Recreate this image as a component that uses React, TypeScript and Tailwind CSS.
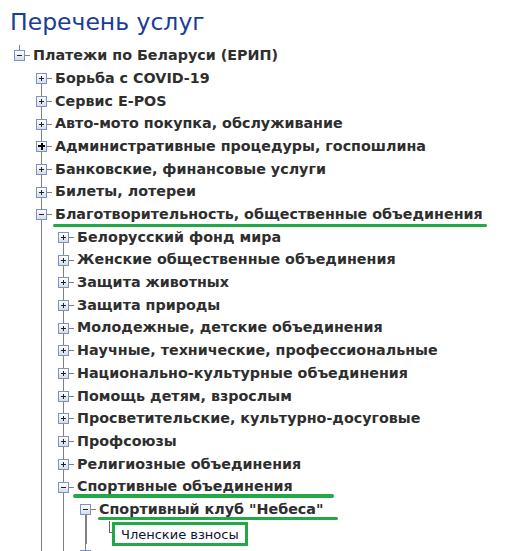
import React from 'react';

type Kind = 'plus' | 'minus' | 'leaf';

interface Row {
    text: string;
    level: number;
    kind: Kind;
    prev?: boolean;
    next?: boolean;
    bold?: boolean;
    mark?: { left: number; width: number; dy: number; h: number };
}

const rows: Row[] = [
    { text: 'Платежи по Беларуси (ЕРИП)', level: 0, kind: 'minus', prev: true },
    { text: 'Борьба с COVID-19', level: 1, kind: 'plus', next: true },
    { text: 'Сервис E-POS', level: 1, kind: 'plus', prev: true, next: true },
    { text: 'Авто-мото покупка, обслуживание', level: 1, kind: 'plus', prev: true, next: true },
    { text: 'Административные процедуры, госпошлина', level: 1, kind: 'plus', prev: true, next: true, bold: true },
    { text: 'Банковские, финансовые услуги', level: 1, kind: 'plus', prev: true, next: true },
    { text: 'Билеты, лотереи', level: 1, kind: 'plus', prev: true, next: true },
    {
        text: 'Благотворительность, общественные объединения', level: 1, kind: 'minus', prev: true, next: true,
        mark: { left: -2, width: 434, dy: 9, h: 3 },
    },
    { text: 'Белорусский фонд мира', level: 2, kind: 'plus', next: true },
    { text: 'Женские общественные объединения', level: 2, kind: 'plus', prev: true, next: true },
    { text: 'Защита животных', level: 2, kind: 'plus', prev: true, next: true },
    { text: 'Защита природы', level: 2, kind: 'plus', prev: true, next: true },
    { text: 'Молодежные, детские объединения', level: 2, kind: 'plus', prev: true, next: true },
    { text: 'Научные, технические, профессиональные', level: 2, kind: 'plus', prev: true, next: true },
    { text: 'Национально-культурные объединения', level: 2, kind: 'plus', prev: true, next: true },
    { text: 'Помощь детям, взрослым', level: 2, kind: 'plus', prev: true, next: true },
    { text: 'Просветительские, культурно-досуговые', level: 2, kind: 'plus', prev: true, next: true },
    { text: 'Профсоюзы', level: 2, kind: 'plus', prev: true, next: true },
    { text: 'Религиозные объединения', level: 2, kind: 'plus', prev: true, next: true },
    {
        text: 'Спортивные объединения', level: 2, kind: 'minus', prev: true, next: true,
        mark: { left: -4, width: 261, dy: 7, h: 4 },
    },
    {
        text: 'Спортивный клуб "Небеса"', level: 3, kind: 'minus', next: true,
        mark: { left: -1, width: 240, dy: 7, h: 3 },
    },
    { text: 'Членские взносы', level: 4, kind: 'leaf' },
    { text: '', level: 3, kind: 'plus', prev: true, next: true },
];

// the selected branch (level 3) is drawn with a heavier line
const THICK = 3;

// for each column left of the row: does the ancestor at that level have a following sibling
const guides = (index: number): boolean[] => {
    const level = rows[index].level;
    const out: boolean[] = [];
    for (let c = 0; c < level; c++) {
        let has = false;
        for (let j = index - 1; j >= 0; j--) {
            if (rows[j].level === c) {
                has = !!rows[j].next;
                break;
            }
        }
        out.push(has);
    }
    return out;
};

function ToggleBox({ kind, bold }: { kind: Kind; bold?: boolean }) {
    return (
        <div className="w-[11px] h-[11px] shrink-0 border border-[#7d93bf] bg-gradient-to-b from-white to-[#d5dcea]">
            <svg width="9" height="9" viewBox="0 0 9 9" className="block" shapeRendering="crispEdges">
                {bold ? (
                    <>
                        <rect x="1" y="3" width="7" height="2" fill="#000" />
                        <rect x="3.5" y="1" width="2" height="7" fill="#000" />
                    </>
                ) : (
                    <>
                        <rect x="2" y="4" width="5" height="1" fill="#222" />
                        {kind === 'plus' && <rect x="4" y="2" width="1" height="5" fill="#222" />}
                    </>
                )}
            </svg>
        </div>
    );
}

function Guide({ on, thick }: { on: boolean; thick: boolean }) {
    return (
        <div className="w-[22px] h-full shrink-0 pl-[5px]">
            {on && <div className={`h-full bg-[#808080] ${thick ? 'w-[2px]' : 'w-px'}`} />}
        </div>
    );
}

export default function App() {
    return (
        <div className="h-[551px] overflow-hidden bg-white font-['DejaVu_Sans',sans-serif]">
            <h1 className="pt-[10.5px] pl-[10px] text-[23.5px] leading-[23px] font-normal text-[#1a3c98]">
                Перечень услуг
            </h1>

            <div className="mt-[11.1px] pl-[14px] flex flex-col">
                {rows.map((row, i) => (
                    <div key={i} className="flex h-[22.7px]">
                        {guides(i).map((on, c) => (
                            <Guide key={c} on={on} thick={c === THICK} />
                        ))}

                        {row.kind === 'leaf' ? (
                            <>
                                <div className="w-[10px] shrink-0 pl-[7px]">
                                    <div className="h-[12px] w-[3px] border-l border-b border-[#666]" />
                                </div>
                                <div className="flex items-center pt-[4px]">
                                    <span className="flex items-center h-[24px] border-[3px] border-[#22a846] px-[6px] text-[13px] text-[#111133] whitespace-nowrap">
                                        {row.text}
                                    </span>
                                </div>
                            </>
                        ) : (
                            <>
                                <div className="w-[11px] shrink-0 flex flex-col items-center">
                                    <div className={`flex-1 w-px ${row.prev ? 'bg-[#808080]' : ''}`} />
                                    <ToggleBox kind={row.kind} bold={row.bold} />
                                    <div
                                        className={`flex-1 ${row.level === THICK ? 'w-[2px]' : 'w-px'} ${row.next ? 'bg-[#808080]' : ''}`}
                                    />
                                </div>
                                <div className="self-center w-[5px] h-px bg-[#808080] mr-[3px]" />
                                <div className="relative flex items-center">
                                    <span className="text-[14.3px] font-bold text-[#2e2e2e] whitespace-nowrap">{row.text}</span>
                                    {row.mark && (
                                        <div
                                            className="absolute rounded-full bg-[#22a846]"
                                            style={{
                                                left: row.mark.left,
                                                width: row.mark.width,
                                                height: row.mark.h,
                                                top: `calc(50% + ${row.mark.dy}px)`,
                                            }}
                                        />
                                    )}
                                </div>
                            </>
                        )}
                    </div>
                ))}
            </div>
        </div>
    );
}
